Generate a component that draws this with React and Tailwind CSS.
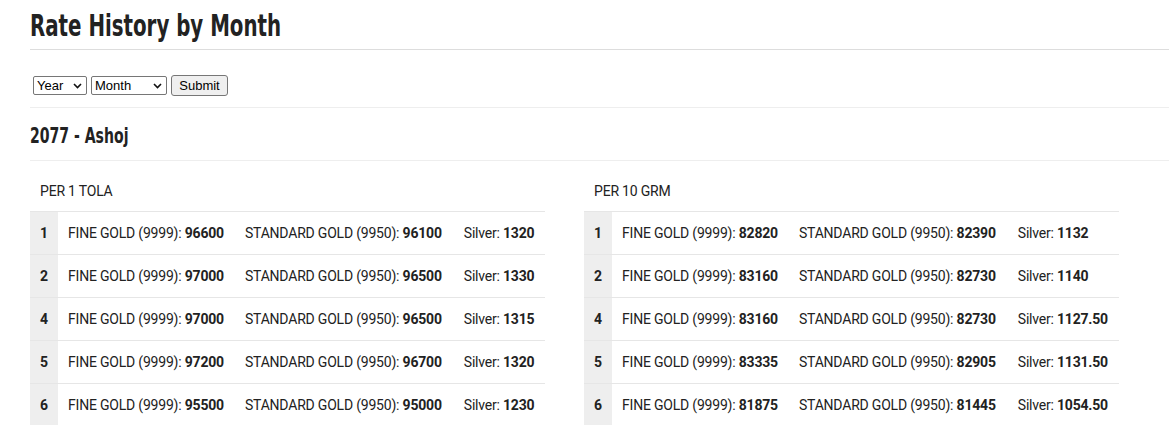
import React from 'react';

const tola = [
  { day: 1, fine: '96600', standard: '96100', silver: '1320' },
  { day: 2, fine: '97000', standard: '96500', silver: '1330' },
  { day: 4, fine: '97000', standard: '96500', silver: '1315' },
  { day: 5, fine: '97200', standard: '96700', silver: '1320' },
  { day: 6, fine: '95500', standard: '95000', silver: '1230' },
];

const grams = [
  { day: 1, fine: '82820', standard: '82390', silver: '1132' },
  { day: 2, fine: '83160', standard: '82730', silver: '1140' },
  { day: 4, fine: '83160', standard: '82730', silver: '1127.50' },
  { day: 5, fine: '83335', standard: '82905', silver: '1131.50' },
  { day: 6, fine: '81875', standard: '81445', silver: '1054.50' },
];

const heading = { fontFamily: '"DejaVu Sans Condensed", "DejaVu Sans", sans-serif' };

const Chevron = () => (
  <svg width="9" height="6" viewBox="0 0 9 6" className="pointer-events-none absolute right-[5px] top-[7px]">
    <path d="M1 1 L4.5 4.5 L8 1" fill="none" stroke="#111" strokeWidth="1.6" />
  </svg>
);

const FakeSelect = ({ label, width }) => (
  <div className="relative flex" style={{ width }}>
    <select className="block h-[19px] w-full appearance-none rounded-[2px] border border-[#767676] bg-white pl-[3px] text-[13px] leading-[17px] text-black">
      <option>{label}</option>
    </select>
    <Chevron />
  </div>
);

const RateTable = ({ title, rows }) => (
  <div className="w-[554px]">
    <div className="h-[50px] pt-[20px] pl-[10px] text-[14px] leading-[20px] tracking-[-0.2px] text-[#222]">{title}</div>
    <table className="border-collapse text-[14px] tracking-[-0.2px] text-[#222]">
      <tbody>
        {rows.map((r) => (
          <tr key={r.day} className="h-[43px] border-t border-[#e6e6e6]">
            <td className="w-[28px] bg-[#eeeeee] text-center font-bold">{r.day}</td>
            <td className="whitespace-nowrap px-[10px]">
              FINE GOLD (9999): <b>{r.fine}</b>
            </td>
            <td className="whitespace-nowrap px-[11px]">
              STANDARD GOLD (9950): <b>{r.standard}</b>
            </td>
            <td className="whitespace-nowrap px-[11px]">
              Silver: <b>{r.silver}</b>
            </td>
          </tr>
        ))}
      </tbody>
    </table>
  </div>
);

export default function App() {
  return (
    <div className="h-[425px] overflow-hidden bg-white" style={{ fontFamily: 'Roboto, "Liberation Sans", sans-serif' }}>
      <div className="ml-[30px] w-[1160px]">
        <div className="h-[50px] border-b border-[#dddddd]">
          <h1 style={heading} className="origin-left scale-x-[0.71] pt-[5px] text-[31px] font-bold leading-[40px] text-[#222]">
            Rate History by Month
          </h1>
        </div>

        <div className="flex h-[58px] items-start gap-[4px] border-b border-[#eeeeee] pt-[26px] pl-[3px]" style={{ fontFamily: '"Liberation Sans", Arial, sans-serif' }}>
          <FakeSelect label="Year" width="54px" />
          <FakeSelect label="Month" width="76px" />
          <button className="-mt-[1px] h-[21px] w-[57px] rounded-[3px] border border-[#767676] bg-[#efefef] text-[13px] text-black">
            Submit
          </button>
        </div>

        <div className="h-[53px] border-b border-[#eeeeee]">
          <h2 style={heading} className="origin-left scale-x-[0.71] pt-[13px] text-[22px] font-bold leading-[30px] text-[#222]">
            2077 - Ashoj
          </h2>
        </div>

        <div className="flex">
          <RateTable title="PER 1 TOLA" rows={tola} />
          <RateTable title="PER 10 GRM" rows={grams} />
        </div>
      </div>
    </div>
  );
}
